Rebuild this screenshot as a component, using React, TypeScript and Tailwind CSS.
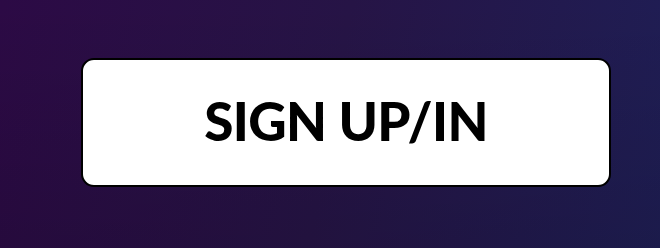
export default function App() {
  return (
    <div className="w-[660px] h-[248px] bg-[linear-gradient(100deg,#2c0a45_0%,#261446_50%,#1f1e55_100%)] relative overflow-hidden">
      <div className="absolute inset-0 bg-[linear-gradient(to_bottom,rgba(0,0,0,0)_0%,rgba(0,0,0,0.12)_100%)]" />
      <div className="relative pt-[58px] pl-[81px]">
        <button className="w-[530px] h-[129px] bg-white border-2 border-black rounded-[13px] flex items-center justify-center pb-[5px]">
          <span className="font-['Lato',sans-serif] font-black text-[53px] leading-none text-black tracking-[-0.6px]">SIGN UP/IN</span>
        </button>
      </div>
    </div>
  );
}
